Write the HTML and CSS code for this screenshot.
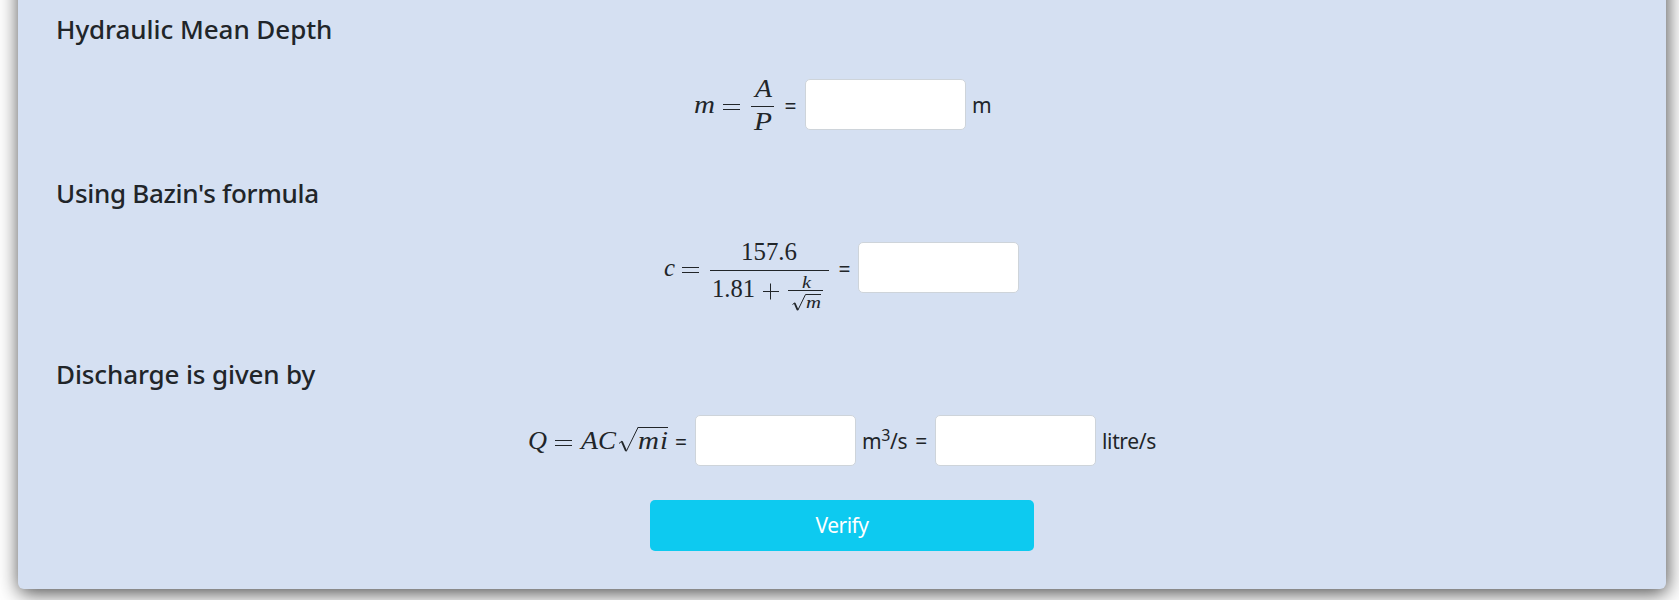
FILE: index.html
```html
<!DOCTYPE html>
<html lang="en">
<head>
<meta charset="utf-8">
<title>Discharge calculation</title>
<link rel="stylesheet" href="styles.css">
</head>
<body>
<main class="card">
  <h2 class="heading"><span class="h-depth">Hydraulic Mean Depth</span></h2>
  <div class="row row-depth">
    <svg class="formula" width="82" height="51" viewBox="694 79 82 51">
      <text class="it" x="694" y="113" textLength="21">m</text>
      <path class="line" d="M723 104.5h17M723 109.5h17"/>
      <text class="it" x="755" y="97" textLength="17">A</text>
      <path class="line" d="M751 106.5h23"/>
      <text class="it" x="754" y="130" textLength="18">P</text>
    </svg>
    <span class="eq">=</span>
    <input class="field" type="text" aria-label="Hydraulic mean depth">
    <span class="unit">m</span>
  </div>
  <h2 class="heading"><span class="h-bazin">Using Bazin's formula</span></h2>
  <div class="row row-bazin">
    <svg class="formula" width="166" height="51" viewBox="664 242 166 51">
      <text class="it" x="664" y="276" textLength="11">c</text>
      <path class="line" d="M682 267.5h17M682 272.5h17"/>
      <text class="num" x="741" y="260" textLength="56">157.6</text>
      <path class="line" d="M710 270.5h119"/>
      <text class="num" x="712" y="297" textLength="43">1.81</text>
      <path class="line" d="M763 291.5h16M770.5 283.5v16"/>
      <text class="it small" x="802" y="288" textLength="9">k</text>
      <path class="line" d="M788 290.5h35M805.5 294.5h15.5"/>
      <path class="line" d="M792.5 304.5l2.3-1.7M797.7 310.5l7.8-16"/>
      <path class="thick" d="M794.6 303l3 7"/>
      <text class="it small" x="806" y="308" textLength="15">m</text>
    </svg>
    <span class="eq">=</span>
    <input class="field" type="text" aria-label="Bazin coefficient">
  </div>
  <h2 class="heading heading-last"><span class="h-discharge">Discharge is given by</span></h2>
  <div class="row row-discharge">
    <svg class="formula" width="140" height="51" viewBox="529 415 140 51">
      <text class="it" x="528" y="449" textLength="19">Q</text>
      <path class="line" d="M555 440.5h17M555 445.5h17"/>
      <text class="it" x="581" y="449" textLength="17">A</text>
      <text class="it" x="598" y="449" textLength="18">C</text>
      <path class="line" d="M619 443.5l3-2.5M626.2 451.5l11.8-24"/>
      <path class="thick" d="M621.8 441.3l4.2 9.5"/>
      <path class="line" d="M637.7 427.5h30.3"/>
      <text class="it" x="638" y="449" textLength="21">m</text>
      <text class="it" x="660" y="449" textLength="8">i</text>
    </svg>
    <span class="eq">=</span>
    <input class="field" type="text" aria-label="Discharge in cubic metres per second">
    <span class="unit cubic">m<sup>3</sup>/s <span class="eq-sign">=</span></span>
    <input class="field" type="text" aria-label="Discharge in litres per second">
    <span class="unit litre">litre/s</span>
  </div>
  <button class="verify" type="button">Verify</button>
</main>
<script src="formula.js"></script>
</body>
</html>
```
FILE: formula.js
```js
// Stretch each symbol to its set advance width.
document.querySelectorAll('.formula text').forEach(function (t) {
  t.setAttribute('lengthAdjust', 'spacingAndGlyphs');
});
```
FILE: styles.css
```css
* { box-sizing: border-box; }
body {
  display: flow-root;
  margin: 0;
  height: 600px;
  overflow: hidden;
  background: #fff;
  color: #212529;
  font-family: "Noto Sans", "Open Sans", sans-serif;
}
.card {
  display: flex;
  flex-direction: column;
  width: 1648px;
  height: 639px;
  margin: -50px 0 0 18px;
  padding: 63px 38px 0;
  background: #d5e0f2;
  border-radius: 6px;
  box-shadow: 1px 4px 20px rgba(0, 0, 0, 0.72);
}
.heading {
  margin: 0;
  height: 32px;
  font-size: 26px;
  line-height: 32px;
  font-weight: 500;
  white-space: nowrap;
}
.heading-last { line-height: 30px; }
.h-depth { letter-spacing: -0.06px; }
.h-bazin { letter-spacing: -0.3px; }
.h-discharge { letter-spacing: -0.12px; }
.row {
  display: flex;
  justify-content: center;
  height: 51px;
  font-size: 21px;
  line-height: 52px;
  white-space: nowrap;
}
.row-depth { margin: 34px 0 47px; }
.row-bazin { margin: 33px 0 66px; padding-right: 1px; }
.row-discharge { margin: 24px 0 34px; }
.formula { flex: none; overflow: visible; }
.formula text { fill: #212529; }
.it { font: italic 25px "Liberation Serif", serif; }
.num { font: 25px "Liberation Serif", serif; }
.small { font-size: 17.5px; }
.line { stroke: #212529; stroke-width: 1; fill: none; }
.thick { stroke: #212529; stroke-width: 1.9; fill: none; }
.eq { flex: none; width: 29px; padding-left: 8.5px; line-height: 55px; }
.row-bazin .eq { width: 28px; }
.row-discharge .eq { width: 26px; padding-left: 6px; }
.field {
  flex: none;
  width: 161px;
  height: 51px;
  padding: 6px 12px;
  border: 1px solid #ced4da;
  border-radius: 5px;
  background: #fff;
  font: inherit;
}
.unit { flex: none; width: 24px; padding-left: 6px; }
.cubic { width: 79px; letter-spacing: -0.4px; }
.cubic sup { font-size: 16px; line-height: 0; }
.eq-sign { margin-left: 3px; }
.litre { width: 59px; letter-spacing: -0.35px; }
.verify {
  align-self: center;
  width: 384px;
  height: 51px;
  padding: 0 0 2px;
  border: 0;
  border-radius: 5px;
  background: #0dcaf0;
  color: #fff;
  font: 21px "Noto Sans", sans-serif;
  letter-spacing: -0.5px;
}
```
